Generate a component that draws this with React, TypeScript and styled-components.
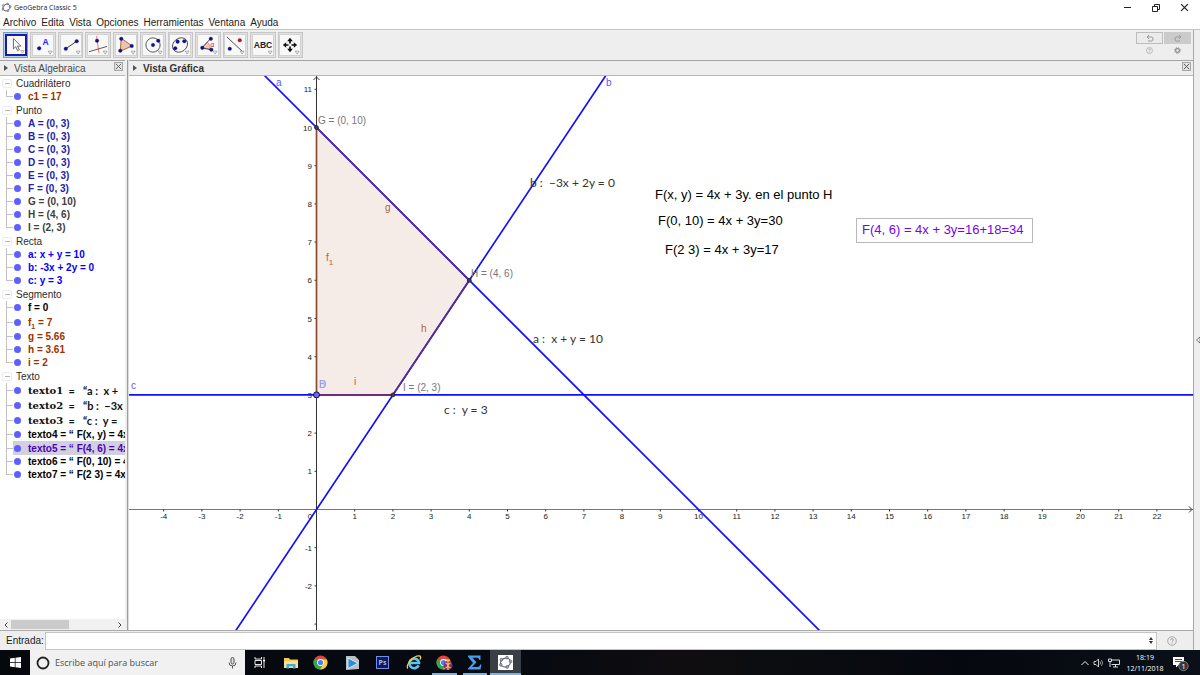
import React from "react";
import styled, { createGlobalStyle, css } from "styled-components";

const GlobalStyle = createGlobalStyle`
  * { box-sizing: border-box; }
  body { margin: 0; background: #eeeeee; }
  button, input { font: inherit; color: inherit; }
  ul { margin: 0; padding: 0; list-style: none; }
`;

const sans = `"Liberation Sans", Arial, sans-serif`;
const uiSans = `"Open Sans", "Noto Sans", sans-serif`;

const Window = styled.div`
  display: flex;
  flex-direction: column;
  height: 100vh;
  overflow: hidden;
  font-family: ${sans};
  font-size: 10px;
  color: #1c1c1c;
  background: #eeeeee;
`;

const PlainButton = styled.button`
  border: 0;
  margin: 0;
  padding: 0;
  background: none;
  display: inline-flex;
  align-items: center;
  justify-content: center;
`;

/* ---------- title bar and menu ---------- */

const TitleBar = styled.header`
  display: flex;
  align-items: center;
  height: 15px;
  flex: none;
  padding: 0 10px 0 1px;
  gap: 2px;
  background: #ffffff;
  font-family: ${uiSans};
  font-size: 7px;
  color: #222222;
`;

const Title = styled.h1`
  margin: 0;
  font-size: 7px;
  font-weight: 400;
  flex: 1;
`;

const WindowButtons = styled.div`
  display: flex;
  gap: 16px;
`;

const WindowButton = styled(PlainButton)`
  width: 12px;
  height: 12px;
`;

const MenuBar = styled.nav`
  display: flex;
  align-items: center;
  gap: 5px;
  height: 14px;
  flex: none;
  padding-left: 3px;
  background: #ffffff;
`;

const MenuItem = styled(PlainButton)`
  height: 14px;
`;

/* ---------- workspace ---------- */

const Workspace = styled.div`
  display: flex;
  flex: 1;
  min-height: 0;
  border-top: 1px solid #c4c4c4;
`;

const WorkspaceMain = styled.div`
  display: flex;
  flex-direction: column;
  flex: 1;
  min-width: 0;
`;

const SideStrip = styled.aside`
  display: flex;
  align-items: center;
  justify-content: flex-end;
  width: 7px;
  flex: none;
  border-left: 1px solid #a8a8a8;
  background: #eeeeee;
`;

const Toolbar = styled.div`
  display: flex;
  justify-content: space-between;
  align-items: flex-start;
  height: 30px;
  flex: none;
  padding: 2px 2px 0 3px;
`;

const Tools = styled.div`
  display: grid;
  grid-template-columns: repeat(11, 1fr);
  gap: 2px;
  width: 300px;
`;

const ToolButton = styled.button<{ $active?: boolean }>`
  display: flex;
  align-items: center;
  justify-content: center;
  height: 26px;
  padding: 0;
  border: 1px solid ${(p) => (p.$active ? "#6f9fce" : "#c6c6c6")};
  background: ${(p) => (p.$active ? "#b4d2ee" : "#e2e2e2")};
  svg {
    background: #f8f8f8;
    border: ${(p) => (p.$active ? "2px solid #1c1c9c" : "1px solid #d2d2d2")};
    width: 22px;
    height: 22px;
  }
`;

const HistoryTools = styled.div`
  display: grid;
  grid-template-columns: 27px 27px;
  column-gap: 1px;
`;

const HistoryButton = styled(PlainButton)<{ $kind: "undo" | "redo" | "flat" }>`
  height: 12px;
  ${(p) =>
    p.$kind === "undo" &&
    css`
      border: 1px solid #bdbdbd;
      background: #ebebeb;
    `}
  ${(p) =>
    p.$kind === "redo" &&
    css`
      background: #cbcbcb;
    `}
`;

const Views = styled.div`
  display: flex;
  flex: 1;
  min-height: 0;
`;

const ViewPanel = styled.section<{ $fixed?: boolean }>`
  display: flex;
  flex-direction: column;
  min-width: 0;
  ${(p) => (p.$fixed ? "width: 125px; flex: none;" : "flex: 1;")}
`;

const Splitter = styled.div`
  width: 4px;
  flex: none;
  background: linear-gradient(90deg, #eeeeee 2px, #9c9c9c 2px, #9c9c9c 3px, #dddddd 3px);
`;

const ViewHeader = styled.div<{ $bold?: boolean }>`
  display: flex;
  align-items: center;
  height: 16px;
  flex: none;
  padding: 0 2px 0 4px;
  gap: 6px;
  border-top: 1px solid #a4a4a4;
  border-bottom: 1px solid #b8b8b8;
  background: #eeeeee;
  color: ${(p) => (p.$bold ? "#333333" : "#4a4a4a")};
  font-weight: ${(p) => (p.$bold ? 700 : 400)};
`;

const ViewTitle = styled.h2`
  margin: 0;
  flex: 1;
  font: inherit;
`;

const CloseButton = styled(PlainButton)`
  width: 9px;
  height: 9px;
  margin-bottom: 3px;
  border: 1px solid #a8a8a8;
  background: #e2e2e2;
`;

/* ---------- algebra tree ---------- */

const Tree = styled.div`
  flex: 1;
  min-height: 0;
  overflow: hidden;
  background: #ffffff;
`;

const GroupHeading = styled.h3`
  display: flex;
  align-items: center;
  gap: 4px;
  height: 14px;
  margin: 0;
  padding-left: 2px;
  font-size: 10px;
  font-weight: 400;
  color: #2c2c2c;
`;

const Collapse = styled(PlainButton)`
  width: 10px;
  height: 9px;
  border: 1px solid #ececec;
  border-radius: 2px;
  &::before {
    content: "";
    width: 5px;
    height: 1px;
    background: #b5b5b5;
  }
`;

const Item = styled.li<{ $h: number; $color: string; $selected?: boolean }>`
  display: flex;
  align-items: center;
  height: ${(p) => p.$h}px;
  white-space: pre;
  font-weight: 700;
  color: ${(p) => p.$color};
  background: ${(p) => (p.$selected ? "linear-gradient(90deg, #ffffff 13px, #d1cfe0 13px)" : "none")};
`;

const Branch = styled.span`
  align-self: stretch;
  display: flex;
  align-items: center;
  width: 8px;
  flex: none;
  margin-left: 6px;
  background: linear-gradient(#c2c2c2, #c2c2c2) 0 0 / 1px 100% no-repeat;
  &::before {
    content: "";
    width: 7px;
    height: 1px;
    background: #c2c2c2;
  }
  ${Item}:last-child > & {
    background-size: 1px 50%;
  }
`;

const VisibilityDot = styled.button`
  width: 7px;
  height: 7px;
  flex: none;
  margin-right: 7px;
  padding: 0;
  border: 0;
  border-radius: 50%;
  background: #5f5fff;
`;

const Sub = styled.sub`
  font-size: 7px;
  line-height: 0;
`;

const MathName = styled.span`
  font-family: "DejaVu Serif", serif;
  font-size: 10px;
  font-weight: 700;
`;

const MathBody = styled.span`
  font-family: Lato, sans-serif;
  font-size: 11px;
  font-weight: 700;
`;

const HScroll = styled.div`
  display: flex;
  align-items: center;
  justify-content: space-between;
  height: 11px;
  flex: none;
  background: #f1f1f1;
`;

const ScrollTrack = styled.div`
  flex: 1;
  height: 10px;
`;

const ScrollThumb = styled.div`
  width: 58px;
  height: 9px;
  background: #cbcbcb;
`;

const ScrollArrow = styled(PlainButton)`
  width: 11px;
  height: 11px;
`;

/* ---------- graphics view ---------- */

const Plot = styled.svg`
  display: block;
  flex: 1 1 0;
  min-height: 0;
  width: 100%;
  background: #ffffff;
  font-family: ${sans};
`;

/* ---------- input bar ---------- */

const InputBar = styled.form`
  display: flex;
  align-items: center;
  height: 20px;
  flex: none;
  padding: 0 16px 0 6px;
  border-top: 1px solid #ababab;
`;

const EntryBox = styled.div`
  display: flex;
  align-items: center;
  flex: 1;
  height: 18px;
  margin: 0 10px 0 1px;
  padding-right: 3px;
  border: 1px solid #c4c4c4;
  background: #ffffff;
`;

const Entry = styled.input`
  flex: 1;
  min-width: 0;
  height: 15px;
  padding: 0 3px;
  border: 0;
  outline: 0;
  background: none;
`;

/* ---------- taskbar ---------- */

const Taskbar = styled.footer`
  display: flex;
  height: 25px;
  flex: none;
  background: linear-gradient(90deg, #05080d 0, #070a10 45%, #100d10 57%, #0b0d11 65%, #05080e 80%, #0b1018 100%);
  font-family: ${uiSans};
  color: #ffffff;
`;

const StartButton = styled(PlainButton)`
  width: 30px;
  height: 25px;
`;

const Search = styled.label`
  display: flex;
  align-items: center;
  width: 215px;
  gap: 5px;
  padding: 0 8px 0 6px;
  background: #f1f1f1;
`;

const SearchInput = styled.input`
  flex: 1;
  min-width: 0;
  padding: 0;
  border: 0;
  outline: 0;
  background: none;
  font-size: 9px;
  color: #444444;
  &::placeholder { color: #505050; opacity: 1; }
`;

const Apps = styled.div`
  display: grid;
  grid-template-columns: repeat(9, 1fr);
  width: 276px;
`;

const AppButton = styled(PlainButton)<{ $state?: "open" | "active" }>`
  height: 25px;
  ${(p) => p.$state === "active" && "background: #3a3f46;"}
  ${(p) => p.$state === "open" && "margin: 0 3px;"}
  ${(p) =>
    p.$state &&
    css`
      box-shadow: inset 0 -2px 0 #7ab4e4;
    `}
`;

const Tray = styled.div`
  display: flex;
  align-items: center;
  gap: 3px;
  margin-left: auto;
  padding-right: 10px;
`;

const Clock = styled.time`
  display: flex;
  flex-direction: column;
  align-items: center;
  width: 44px;
  font-size: 7px;
  line-height: 11px;
`;

const Notifications = styled(PlainButton)`
  margin-left: 2px;
`;

/* ---------- icons ---------- */

const LogoMark = ({ size, dark }: { size: number; dark?: boolean }) => (
  <svg width={size} height={size} viewBox="0 0 16 16">
    {dark && <rect width="16" height="16" fill="#fff" />}
    <ellipse cx="8" cy="8" rx="5.4" ry="4.6" transform="rotate(-25 8 8)" fill="none" stroke="#666" strokeWidth="1.3" />
    {[[3, 10.5], [3.6, 5], [9.6, 2.8], [13.4, 6.8], [9.8, 12.8]].map(([x, y]) => (
      <circle key={`${x}`} cx={x} cy={y} r="1.5" fill="#9f9fdc" stroke="#555" strokeWidth=".6" />
    ))}
  </svg>
);

const navy = "#10109a";
const Dot = ({ x, y, c = navy }: { x: number; y: number; c?: string }) => (
  <circle cx={x} cy={y} r="1.9" fill={c} stroke="#000040" strokeWidth=".3" />
);

const toolIcons: { name: string; art: React.ReactNode }[] = [
  {
    name: "Elige y mueve",
    art: <path d="M7.500 3v12l2.700-2.500 2.200 4.600 2-1-2.200-4.300h3.900z" fill="#fff" stroke="#444" strokeWidth=".9" />,
  },
  {
    name: "Punto",
    art: (
      <>
        <Dot x={6.5} y={14} />
        <text x="10" y="10.500" fontSize="9" fontWeight="700" fill="#2222ff">A</text>
      </>
    ),
  },
  {
    name: "Recta",
    art: (
      <>
        <path d="M5 14.500L16.500 6.500" stroke="#333" />
        <Dot x={5} y={14.5} />
        <Dot x={16.5} y={6.5} />
      </>
    ),
  },
  {
    name: "Perpendicular",
    art: (
      <>
        <path d="M9 1L11.500 19" stroke="#f07070" />
        <path d="M1 17.500L20 12" stroke="#555" />
        <Dot x={9.5} y={6} />
      </>
    ),
  },
  {
    name: "Polígono",
    art: (
      <>
        <path d="M5.500 3.500L17 11.500L4.500 17z" fill="#e9c6b4" stroke="#a5653f" />
        <Dot x={5.5} y={4} />
        <Dot x={16.5} y={11.5} />
        <Dot x={4.5} y={16.5} />
      </>
    ),
  },
  {
    name: "Circunferencia",
    art: (
      <>
        <circle cx="10.500" cy="10.500" r="7.500" fill="none" stroke="#444" strokeWidth=".9" />
        <Dot x={10.5} y={10.5} />
        <Dot x={16} y={6} />
      </>
    ),
  },
  {
    name: "Cónica",
    art: (
      <>
        <ellipse cx="10.500" cy="10.500" rx="8.500" ry="7" transform="rotate(-38 10.500 10.500)" fill="none" stroke="#444" strokeWidth=".9" />
        <Dot x={8} y={7} />
        <Dot x={15} y={6.5} />
        <Dot x={5.5} y={14} />
      </>
    ),
  },
  {
    name: "Ángulo",
    art: (
      <>
        <path d="M4 14L10 7.500A9 9 0 0 1 13 15z" fill="#f7c4c4" stroke="#f06060" strokeWidth=".7" />
        <path d="M13.500 3.500L4 13.500L14.500 15.500" fill="none" stroke="#444" />
        <Dot x={13.5} y={4} />
        <Dot x={4.5} y={13.5} />
        <Dot x={14} y={15.5} />
        <text x="13" y="12.500" fontSize="7" fill="#e02020">α</text>
      </>
    ),
  },
  {
    name: "Simetría",
    art: (
      <>
        <path d="M2 2L19 18" stroke="#444" />
        <Dot x={15.5} y={5.5} c="#d01010" />
        <Dot x={5} y={14.5} />
      </>
    ),
  },
  {
    name: "Texto",
    art: (
      <text x="10.500" y="14" textAnchor="middle" fontSize="9" fontWeight="700" fill="#222">ABC</text>
    ),
  },
  {
    name: "Desplaza vista gráfica",
    art: (
      <g fill="#111">
        <path d="M10.500 3l3 3.500h-6zM10.500 18l3-3.500h-6zM3 10.500l3.500-3v6zM18 10.500l-3.500-3v6z" />
        <path d="M10.500 5.500v10M5.500 10.500h10" stroke="#111" strokeWidth="1.800" strokeDasharray="3.500 3" />
      </g>
    ),
  },
];

const Triangle = () => (
  <svg width="4" height="6" viewBox="0 0 4 6"><path d="M0 0L4 3L0 6z" fill="#555" /></svg>
);

const Cross = ({ size, color }: { size: number; color: string }) => (
  <svg width={size} height={size} viewBox="0 0 8 8"><path d="M1 1l6 6M7 1l-6 6" stroke={color} strokeWidth="1.100" /></svg>
);

const HelpMark = ({ size }: { size: number }) => (
  <svg width={size} height={size} viewBox="0 0 10 10">
    <circle cx="5" cy="5" r="4.300" fill="none" stroke="#a0a0a0" strokeWidth=".9" />
    <path d="M3.600 4.200q0-1.500 1.400-1.500t1.400 1.200q0 .8-1.400 1.700M5 6.600v1" fill="none" stroke="#999" strokeWidth=".9" />
  </svg>
);

const Chrome = ({ badge }: { badge?: boolean }) => (
  <svg width="17" height="15" viewBox="0 0 17 15">
    <circle cx="7.500" cy="7.500" r="7" fill="#e0463a" />
    <path d="M1.300 4.200A7 7 0 0 0 7 14.500L10.300 9z" fill="#2fa652" />
    <path d="M7 14.500A7 7 0 0 0 13.800 4.500H7.500L10.400 9z" fill="#f8cf3e" />
    <circle cx="7.500" cy="7.500" r="3.400" fill="#fff" />
    <circle cx="7.500" cy="7.500" r="2.600" fill="#4283e8" />
    {badge && (
      <>
        <circle cx="12" cy="10.500" r="4.500" fill="#8b2a8a" />
        <path d="M12 6v9M9.500 8q5 2.500 0 5M14.500 8q-5 2.500 0 5" fill="none" stroke="#f2c83c" strokeWidth="1.200" />
      </>
    )}
  </svg>
);

const apps: { name: string; state?: "open" | "active"; art: React.ReactNode }[] = [
  {
    name: "Vista de tareas",
    art: (
      <svg width="12" height="11" viewBox="0 0 12 11">
        <path d="M1 0v2h6.500V0M1 11V9h6.500v2M1 3.500h6.500v4H1zM10 0v2M10 4.500v6.500" fill="none" stroke="#e8e8e8" />
        <path d="M9 2.500h2v2H9z" fill="#fff" />
      </svg>
    ),
  },
  {
    name: "Explorador",
    art: (
      <svg width="14" height="12" viewBox="0 0 14 12">
        <path d="M0 1h5l1 1.500h8V11H0z" fill="#f2c75c" />
        <path d="M0 4h14v7H0z" fill="#fbe08e" />
        <path d="M2.500 11.500V7h9v4.500H9V9.200H5v2.300z" fill="#3fa9e0" />
      </svg>
    ),
  },
  { name: "Chrome", art: <Chrome /> },
  {
    name: "Reproductor",
    art: (
      <svg width="15" height="14" viewBox="0 0 15 14">
        <path d="M1 0h9l4 4v9L1 14z" fill="#b9c0c6" />
        <path d="M3 2l10 5.200L3 12.500z" fill="#2c8fd6" stroke="#e8f4ff" strokeWidth=".8" />
      </svg>
    ),
  },
  {
    name: "Photoshop",
    art: (
      <svg width="13" height="13" viewBox="0 0 13 13">
        <rect x=".5" y=".5" width="12" height="12" fill="#0c1a55" stroke="#6f8fe8" />
        <text x="6.500" y="9" textAnchor="middle" fontSize="7" fontWeight="700" fill="#9fc0ff">Ps</text>
      </svg>
    ),
  },
  {
    name: "Internet Explorer",
    art: (
      <svg width="16" height="15" viewBox="0 0 16 15">
        <path d="M12.600 10.400A4.800 4.800 0 1 1 13 8H4.500" fill="none" stroke="#5cc2f2" strokeWidth="2.700" />
        <path d="M2 13.500Q0 12 3.500 6.500Q9 .5 13.500 1Q15.500 1.500 14 4.500" fill="none" stroke="#f4cf4a" strokeWidth="1.300" />
      </svg>
    ),
  },
  { name: "Chrome, perfil", state: "open", art: <Chrome badge /> },
  {
    name: "Sigma",
    state: "open",
    art: (
      <svg width="15" height="15" viewBox="0 0 15 15">
        <path d="M1 .5h12.500V5h-1.200Q12 2.700 10 2.700H5.500L9.500 7.300L5 12h5.500Q12.700 12 13.200 9.500h1.200L13.500 14.500H1V13.500L6 8L1 1.700z" fill="#4a9be8" />
      </svg>
    ),
  },
  { name: "GeoGebra", state: "active", art: <LogoMark size={15} dark /> },
];

/* ---------- algebra data ---------- */

type Row = {
  id: string;
  color: string;
  text: React.ReactNode;
  height?: number;
  selected?: boolean;
};

const brown = "#993300";
const pointBlue = "#2222a8";
const lineBlue = "#0000ff";
const grey = "#404040";

const latexRow = (name: string, body: string): Row => ({
  id: name,
  color: "#111111",
  height: 15,
  text: (
    <>
      <MathName>{name}</MathName>
      <MathBody>{`  =   “${body}`}</MathBody>
    </>
  ),
});

const groups: { title: string; rows: Row[] }[] = [
  { title: "Cuadrilátero", rows: [{ id: "c1", color: brown, text: "c1 = 17" }] },
  {
    title: "Punto",
    rows: [
      ...["A", "B", "C", "D", "E", "F"].map((n) => ({ id: n, color: pointBlue, text: `${n} = (0, 3)` })),
      { id: "G", color: grey, text: "G = (0, 10)" },
      { id: "H", color: grey, text: "H = (4, 6)" },
      { id: "I", color: grey, text: "I = (2, 3)" },
    ],
  },
  {
    title: "Recta",
    rows: [
      { id: "a", color: lineBlue, text: "a: x + y = 10" },
      { id: "b", color: lineBlue, text: "b: -3x + 2y = 0" },
      { id: "c", color: lineBlue, text: "c: y = 3" },
    ],
  },
  {
    title: "Segmento",
    rows: [
      { id: "f", color: "#000000", text: "f = 0" },
      { id: "f1", color: brown, height: 16, text: <span>f<Sub>1</Sub> = 7</span> },
      { id: "g", color: brown, text: "g = 5.66" },
      { id: "h", color: brown, text: "h = 3.61" },
      { id: "i", color: brown, text: "i = 2" },
    ],
  },
  {
    title: "Texto",
    rows: [
      latexRow("texto1", "a :  x +"),
      latexRow("texto2", "b :  −3x"),
      latexRow("texto3", "c :  y ="),
      { id: "texto4", color: "#000000", text: "texto4 = “ F(x, y) = 4x" },
      { id: "texto5", color: "#4b00b8", text: "texto5 = “ F(4, 6) = 4x", selected: true, height: 14 },
      { id: "texto6", color: "#000000", text: "texto6 = “ F(0, 10) = 4" },
      { id: "texto7", color: "#000000", text: "texto7 = “ F(2 3) = 4x" },
    ],
  },
];

/* ---------- plot ---------- */

const UNIT = 38.2;
const ORIGIN = { x: 187.5, y: 433.5 };
const px = (x: number) => ORIGIN.x + x * UNIT;
const py = (y: number) => ORIGIN.y - y * UNIT;

const range = (from: number, to: number) =>
  Array.from({ length: to - from + 1 }, (_, i) => from + i).filter((n) => n !== 0);

const Line = ({ a, b, color }: { a: [number, number]; b: [number, number]; color: string }) => (
  <line x1={px(a[0])} y1={py(a[1])} x2={px(b[0])} y2={py(b[1])} stroke={color} strokeWidth="1.7" />
);

const AxisText = styled.text`
  font-size: 8px;
  fill: #222222;
`;
const ObjectLabel = styled.text`
  font-size: 10px;
`;
const Note = styled.text`
  font-size: 13px;
`;
const Equation = styled.text`
  font-family: Lato, sans-serif;
  font-size: 12px;
  fill: #333333;
  white-space: pre;
`;

const GraphicsView = () => (
  <Plot role="img" aria-label="Vista Gráfica">
    <polygon
      points={[[0, 3], [0, 10], [4, 6], [2, 3]].map(([x, y]) => `${px(x)},${py(y)}`).join(" ")}
      fill="#f5ebe7"
    />
    <g stroke="#333333">
      <line x1="0" x2="100%" y1={ORIGIN.y} y2={ORIGIN.y} stroke="#777777" />
      <line x1={ORIGIN.x} x2={ORIGIN.x} y1="0" y2="100%" />
      <path d={`M${ORIGIN.x - 3} 4L${ORIGIN.x} 1L${ORIGIN.x + 3} 4`} fill="none" />
      <svg x="100%" y={ORIGIN.y} overflow="visible">
        <path d="M-4 -3L-1 0L-4 3" fill="none" />
      </svg>
      {range(-4, 22).map((n) => (
        <line key={n} x1={px(n)} x2={px(n)} y1={ORIGIN.y} y2={ORIGIN.y + 2} />
      ))}
      {range(-3, 11).map((n) => (
        <line key={n} x1={ORIGIN.x - 2} x2={ORIGIN.x} y1={py(n)} y2={py(n)} />
      ))}
    </g>
    {range(-4, 22).map((n) => (
      <AxisText key={n} x={px(n)} y={443} textAnchor="middle">{n}</AxisText>
    ))}
    <AxisText x={181} y={443} textAnchor="middle">0</AxisText>
    {range(-2, 11).map((n) => (
      <AxisText key={n} x={183} y={py(n) + 3} textAnchor="end">{n}</AxisText>
    ))}

    <Line a={[-3, 13]} b={[15, -5]} color="#1010ff" />
    <Line a={[-4, -6]} b={[9, 13.5]} color="#1010ff" />
    <line x1="0" x2="100%" y1={py(3)} y2={py(3)} stroke="#1010ff" strokeWidth="1.7" />

    <Line a={[0, 3]} b={[0, 10]} color="#8a4a30" />
    <Line a={[0, 10]} b={[4, 6]} color="#5a2a94" />
    <Line a={[4, 6]} b={[2, 3]} color="#5a2a94" />
    <Line a={[0, 3]} b={[2, 3]} color="#6b2a78" />

    {[[0, 10], [4, 6], [2, 3]].map(([x, y]) => (
      <circle key={`${x}`} cx={px(x)} cy={py(y)} r="2" fill="#404040" stroke="#111111" strokeWidth=".6" />
    ))}
    <circle cx={px(0)} cy={py(3)} r="3" fill="#6a6af0" stroke="#111133" />

    <g fill="#5a5aff">
      <ObjectLabel x={147} y={10}>a</ObjectLabel>
      <ObjectLabel x={477} y={10}>b</ObjectLabel>
      <ObjectLabel x={2} y={313}>c</ObjectLabel>
    </g>
    <g fill="#9c9cf4">
      <ObjectLabel x={190} y={312}>B</ObjectLabel>
      <ObjectLabel x={190} y={312}>D</ObjectLabel>
    </g>
    <g fill="#777777">
      <ObjectLabel x={189} y={48}>G = (0, 10)</ObjectLabel>
      <ObjectLabel x={342} y={201}>H = (4, 6)</ObjectLabel>
      <ObjectLabel x={274} y={315}>I = (2, 3)</ObjectLabel>
    </g>
    <g fill="#b0643f">
      <ObjectLabel x={256} y={135}>g</ObjectLabel>
      <ObjectLabel x={292} y={256}>h</ObjectLabel>
      <ObjectLabel x={225} y={309}>i</ObjectLabel>
      <ObjectLabel x={197} y={185}>
        f<tspan dy="4" fontSize="8">1</tspan>
      </ObjectLabel>
    </g>

    <Equation x={401} y={111}>b :  −3x + 2y = 0</Equation>
    <Equation x={404} y={267}>a :  x + y = 10</Equation>
    <Equation x={315} y={338}>c :  y = 3</Equation>

    <Note x={526} y={123}>F(x, y) = 4x + 3y. en el punto H</Note>
    <Note x={529} y={149}>F(0, 10) = 4x + 3y=30</Note>
    <Note x={536} y={178}>F(2 3) = 4x + 3y=17</Note>
    <rect x="727.5" y="142.5" width="176" height="24" fill="#fff" stroke="#b8b8b8" />
    <Note x={733} y={158} fill="#7a00f0">F(4, 6) = 4x + 3y=16+18=34</Note>
  </Plot>
);

export default function App() {
  return (
    <Window>
      <GlobalStyle />
      <TitleBar>
        <LogoMark size={11} />
        <Title>GeoGebra Classic 5</Title>
        <WindowButtons>
          <WindowButton aria-label="Minimizar">
            <svg width="8" height="8"><path d="M0 3.500h7" stroke="#222" /></svg>
          </WindowButton>
          <WindowButton aria-label="Restaurar">
            <svg width="8" height="8"><path d="M.5 2.500h5v5h-5zM2.500 2V.5h5v5H6" fill="none" stroke="#222" /></svg>
          </WindowButton>
          <WindowButton aria-label="Cerrar"><Cross size={9} color="#222" /></WindowButton>
        </WindowButtons>
      </TitleBar>
      <MenuBar>
        {["Archivo", "Edita", "Vista", "Opciones", "Herramientas", "Ventana", "Ayuda"].map((m) => (
          <MenuItem key={m}>{m}</MenuItem>
        ))}
      </MenuBar>

      <Workspace>
        <WorkspaceMain>
          <Toolbar>
            <Tools>
              {toolIcons.map((t, i) => (
                <ToolButton key={t.name} aria-label={t.name} $active={i === 0}>
                  <svg viewBox="0 0 21 21">
                    {t.art}
                    <path d="M16 17h4l-2 3z" fill="#fff" stroke="#888" strokeWidth=".7" />
                  </svg>
                </ToolButton>
              ))}
            </Tools>
            <HistoryTools>
              <HistoryButton $kind="undo" aria-label="Deshacer">
                <svg width="8" height="7"><path d="M3 0L1 2l2 2M1 2h4.500q1.500 0 1.500 2t-1.500 2H2" fill="none" stroke="#999" /></svg>
              </HistoryButton>
              <HistoryButton $kind="redo" aria-label="Rehacer">
                <svg width="8" height="7"><path d="M5 0l2 2l-2 2M7 2H2.500Q1 2 1 4t1.500 2H6" fill="none" stroke="#999" /></svg>
              </HistoryButton>
              <HistoryButton $kind="flat" aria-label="Ayuda"><HelpMark size={7} /></HistoryButton>
              <HistoryButton $kind="flat" aria-label="Configuración">
                <svg width="7" height="7" viewBox="0 0 8 8">
                  <circle cx="4" cy="4" r="2.200" fill="none" stroke="#888" strokeWidth="1.300" />
                  <circle cx="4" cy="4" r="3.400" fill="none" stroke="#888" strokeDasharray="1.300 1.370" />
                </svg>
              </HistoryButton>
            </HistoryTools>
          </Toolbar>

          <Views>
            <ViewPanel $fixed>
              <ViewHeader>
                <Triangle />
                <ViewTitle>Vista Algebraica</ViewTitle>
                <CloseButton aria-label="Cerrar vista"><Cross size={7} color="#666" /></CloseButton>
              </ViewHeader>
              <Tree>
                {groups.map((g) => (
                  <div key={g.title}>
                    <GroupHeading>
                      <Collapse aria-label={`Contraer ${g.title}`} />
                      {g.title}
                    </GroupHeading>
                    <ul>
                      {g.rows.map((r) => (
                        <Item key={r.id} $h={r.height ?? 13} $color={r.color} $selected={r.selected}>
                          <Branch />
                          <VisibilityDot aria-label={`Mostrar ${r.id}`} />
                          {r.text}
                        </Item>
                      ))}
                    </ul>
                  </div>
                ))}
              </Tree>
              <HScroll>
                <ScrollArrow aria-label="Izquierda">
                  <svg width="4" height="6"><path d="M3.500 .5L1 3l2.500 2.500" fill="none" stroke="#444" /></svg>
                </ScrollArrow>
                <ScrollTrack><ScrollThumb /></ScrollTrack>
                <ScrollArrow aria-label="Derecha">
                  <svg width="4" height="6"><path d="M.5 .5L3 3L.5 5.500" fill="none" stroke="#444" /></svg>
                </ScrollArrow>
              </HScroll>
            </ViewPanel>
            <Splitter />
            <ViewPanel>
              <ViewHeader $bold>
                <Triangle />
                <ViewTitle>Vista Gráfica</ViewTitle>
                <CloseButton aria-label="Cerrar vista"><Cross size={7} color="#555" /></CloseButton>
              </ViewHeader>
              <GraphicsView />
            </ViewPanel>
          </Views>

          <InputBar>
            <label htmlFor="entry">Entrada:</label>
            <EntryBox>
              <Entry id="entry" />
              <svg width="4" height="7"><path d="M0 3L2 0L4 3zM0 4h4L2 7z" fill="#333" /></svg>
            </EntryBox>
            <PlainButton type="button" aria-label="Ayuda de entrada"><HelpMark size={10} /></PlainButton>
          </InputBar>
        </WorkspaceMain>
        <SideStrip>
          <svg width="4" height="8"><path d="M4 1L.5 4L4 7z" fill="#fff" stroke="#555" strokeWidth=".8" /></svg>
        </SideStrip>
      </Workspace>

      <Taskbar>
        <StartButton aria-label="Inicio">
          <svg width="11" height="11" viewBox="0 0 11 11">
            <path d="M0 1.500L4.800 .8V5.200H0zM5.500 .7L11 0v5.200H5.500zM0 5.900h4.800v4.400L0 9.600zM5.500 5.900H11V11l-5.500-.7z" fill="#fff" />
          </svg>
        </StartButton>
        <Search>
          <svg width="14" height="14"><circle cx="7" cy="7" r="5.500" fill="none" stroke="#222" strokeWidth="1.800" /></svg>
          <SearchInput placeholder="Escribe aquí para buscar" aria-label="Buscar" />
          <svg width="9" height="12"><rect x="3" y=".5" width="3" height="6.500" rx="1.500" fill="#ddd" stroke="#444" strokeWidth=".9" /><path d="M1 5.500q0 3.500 3.500 3.500T8 5.500M4.500 9v2.500" fill="none" stroke="#444" strokeWidth=".9" /></svg>
        </Search>
        <Apps>
          {apps.map((a) => (
            <AppButton key={a.name} aria-label={a.name} $state={a.state}>{a.art}</AppButton>
          ))}
        </Apps>
        <Tray>
          <PlainButton aria-label="Iconos ocultos">
            <svg width="10" height="6"><path d="M1.500 5L5 1.500L8.500 5" fill="none" stroke="#eee" /></svg>
          </PlainButton>
          <PlainButton aria-label="Volumen">
            <svg width="12" height="10"><path d="M1 3.500h2L5.500 1v8L3 6.500H1z" fill="none" stroke="#ddd" strokeWidth=".9" /><path d="M7 3.500q1.200 1.500 0 3M8.500 2.200q2.200 2.800 0 5.600" fill="none" stroke="#bbb" strokeWidth=".8" /></svg>
          </PlainButton>
          <PlainButton aria-label="Red">
            <svg width="12" height="10"><path d="M4 2h7.500v4.500H3.500M7.500 6.500V9M5 9h5M.5 1h3v2.500h-3zM2 3.500V9" fill="none" stroke="#eee" strokeWidth=".9" /></svg>
          </PlainButton>
          <Clock>
            <span>18:19</span>
            <span>12/11/2018</span>
          </Clock>
          <Notifications aria-label="Notificaciones">
            <svg width="18" height="18" viewBox="0 0 18 18">
              <path d="M1 3h11v8H6.500L4 13.500V11H1z" fill="#fff" />
              <path d="M3 5.500h7M3 7.500h7" stroke="#222" strokeWidth=".8" />
              <circle cx="11.500" cy="12" r="4.700" fill="#33373d" stroke="#888" strokeWidth=".8" />
              <text x="11.500" y="15" textAnchor="middle" fontSize="8" fill="#fff">1</text>
            </svg>
          </Notifications>
        </Tray>
      </Taskbar>
    </Window>
  );
}
